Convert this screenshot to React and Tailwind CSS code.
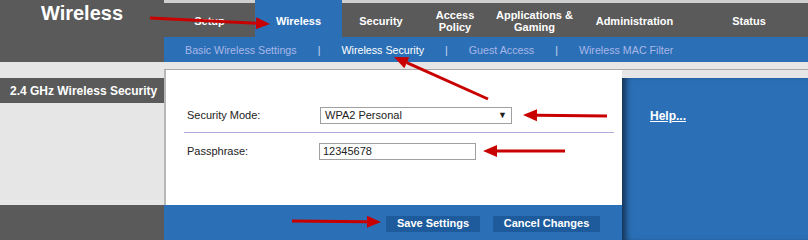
import React from 'react';

const tabs = [
    { label: 'Setup', w: 'w-[91px]' },
    { label: 'Wireless', w: 'w-[87px]', active: true },
    { label: 'Security', w: 'w-[78px]' },
    { label: 'Access\nPolicy', w: 'w-[70px]' },
    { label: 'Applications &\nGaming', w: 'w-[89px]' },
    { label: 'Administration', w: 'w-[111px]' },
    { label: 'Status', w: 'flex-1' },
];

const subTabs = [
    { label: 'Basic Wireless Settings' },
    { label: 'Wireless Security', active: true },
    { label: 'Guest Access' },
    { label: 'Wireless MAC Filter' },
];

function Arrow({ x1, y1, x2, y2 }) {
    // red annotation arrow, tip at (x2, y2)
    const a = Math.atan2(y2 - y1, x2 - x1);
    const len = 14, half = 6;
    const bx = x2 - len * Math.cos(a), by = y2 - len * Math.sin(a);
    const p1 = `${bx + half * Math.sin(a)},${by - half * Math.cos(a)}`;
    const p2 = `${bx - half * Math.sin(a)},${by + half * Math.cos(a)}`;
    return (
        <g>
            <line x1={x1} y1={y1} x2={bx} y2={by} stroke="#c80000" strokeWidth="3" />
            <polygon points={`${x2},${y2} ${p1} ${p2}`} fill="#c80000" />
        </g>
    );
}

export default function App() {
    return (
        <div className="relative w-[808px] h-[240px] overflow-hidden bg-[#e6e6e6] font-['Liberation_Sans',Arial,sans-serif]">
            {/* header */}
            <div className="flex h-[62px]">
                <div className="w-[164px] bg-[#5a5a5a] text-white font-bold text-[20px] leading-none text-center pt-[3px]">
                    Wireless
                </div>
                <div className="flex-1 flex flex-col">
                    <div className="flex h-[37px] bg-[#5a5a5a]">
                        {tabs.map((t, i) => (
                            <div key={i}
                                className={`${t.w} flex items-center justify-center text-center whitespace-pre-line text-white font-bold text-[11px] leading-[12px] ${t.active ? 'bg-[#2b70b7] pt-[4px]' : 'border-t-[3px] border-[#cfcfcf] pt-[2px]'}`}>
                                {t.label}
                            </div>
                        ))}
                    </div>
                    <div className="flex-1 bg-[#2b70b7] flex items-center pl-[21px] pt-[1px] text-[10.7px]">
                        {subTabs.map((s, i) => (
                            <React.Fragment key={i}>
                                {i > 0 && <span className="text-[#c8d6f0] mx-[21px]">|</span>}
                                <span className={s.active ? 'text-white' : 'text-[#a9b6e8]'}>{s.label}</span>
                            </React.Fragment>
                        ))}
                    </div>
                </div>
            </div>

            {/* body */}
            <div className="flex h-[178px]">
                <div className="w-[164px] flex flex-col">
                    <div className="flex-1 pt-[16px]">
                        <div className="h-[25px] bg-[#5a5a5a] text-white font-bold text-[12px] flex items-center pl-[10px]">
                            2.4 GHz Wireless Security
                        </div>
                    </div>
                    <div className="h-[35px] bg-[#5a5a5a]" />
                </div>

                <div className="w-[458px] flex flex-col">
                    <div className="h-[8px] bg-[#e6e6e6] border-b border-[#a8a8a8]" />
                    <div className="flex-1 bg-white border-l-2 border-[#b8b8b8] flex flex-col pl-[21px] pr-[8px] pt-[37px] text-[11px] text-[#222]">
                        <div className="flex items-center h-[17px]">
                            <span className="w-[133px]">Security Mode:</span>
                            <div className="w-[192px] h-[17px] border border-[#a0a0a0] flex items-center justify-between px-[4px] text-[11px]">
                                <span>WPA2 Personal</span>
                                <span className="text-[9px]">▼</span>
                            </div>
                        </div>
                        <div className="h-px bg-[#b4acd8] mt-[8px] -ml-[3px]" />
                        <div className="flex items-center h-[17px] mt-[10px]">
                            <span className="w-[132px]">Passphrase:</span>
                            <div className="w-[157px] h-[17px] border border-[#a0a0a0] flex items-center px-[3px]">
                                12345678
                            </div>
                        </div>
                    </div>
                    <div className="h-[35px] bg-[#2b70b7] flex items-center pl-[222px] pt-[2px] gap-[13px]">
                        <button className="w-[94px] h-[16px] bg-[#1d5b9c] text-white font-bold text-[11px] leading-none">Save Settings</button>
                        <button className="w-[107px] h-[16px] bg-[#1d5b9c] text-white font-bold text-[11px] leading-none">Cancel Changes</button>
                    </div>
                </div>

                <div className="flex-1 flex flex-col">
                    <div className="h-[8px] bg-[#e6e6e6] border-b border-[#a8a8a8]" />
                    <div className="h-[8px] bg-[#e6e6e6]" />
                    <div className="flex-1 bg-[#2b70b7] shadow-[inset_7px_0_6px_-3px_rgba(0,0,0,0.55)] pl-[28px] pt-[25px]">
                        <span className="text-white font-bold underline text-[12px]">Help...</span>
                    </div>
                </div>
            </div>

            {/* annotation arrows */}
            <svg className="absolute left-0 top-0 pointer-events-none" width="808" height="240">
                <Arrow x1={150} y1={18} x2={270} y2={24} />
                <Arrow x1={488} y1={99} x2={394} y2={57} />
                <Arrow x1={607} y1={116} x2={523} y2={115} />
                <Arrow x1={565} y1={151} x2={483} y2={151} />
                <Arrow x1={292} y1={221} x2={381} y2={222} />
            </svg>
        </div>
    );
}
